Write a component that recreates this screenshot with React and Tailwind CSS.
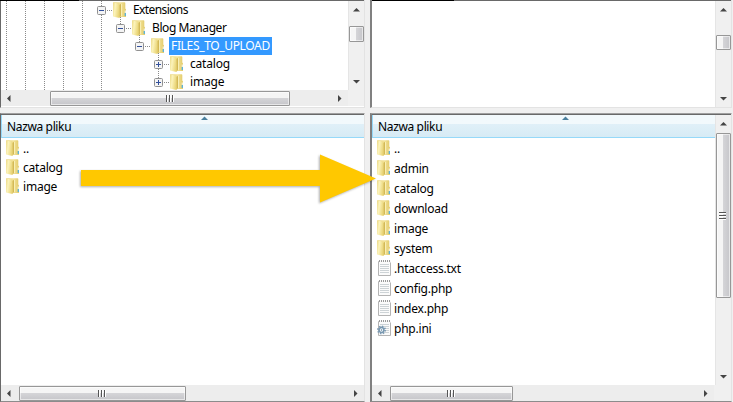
import React from 'react';

const Folder = () => (
  <svg width="14" height="16" viewBox="0 0 14 16" className="block shrink-0">
    <defs>
      <linearGradient id="front" x1="0" x2="1" y1="0" y2=".3">
        <stop offset="0" stopColor="#ecd984" />
        <stop offset="0.4" stopColor="#fbf3bb" />
        <stop offset="1" stopColor="#ead679" />
      </linearGradient>
      <linearGradient id="back" x1="0" x2="1">
        <stop offset="0" stopColor="#ead680" />
        <stop offset="0.6" stopColor="#f3e399" />
        <stop offset="1" stopColor="#e2ca68" />
      </linearGradient>
    </defs>
    <path d="M0 1Q0 .3 .8 .3H11.500Q12.300 .3 12.300 1V6.500L13 7.500V14.500Q13 15 12.500 15H6L1 14Z" fill="url(#back)" />
    <path d="M0 1Q0 .5 .8 .6L6.500 2V15.900L.8 14.800Q0 14.600 0 14Z" fill="url(#front)" />
    <path d="M6.500 3L8 1.800V13.800L6.500 15.900Z" fill="#d3b956" />
    <path d="M8.500 2V14" stroke="#f8efb5" />
    <path d="M12.300 8.500v2.500" stroke="#f4f3e4" strokeWidth="1.200" />
    <path d="M12.300 11v3" stroke="#4fb0e4" strokeWidth="1.200" />
  </svg>
);

const Page = ({ gear }) => (
  <svg width="15" height="16" viewBox="0 0 15 16" className="block shrink-0">
    <path d="M1.500 1.500H13.500V15.500H1.500Z" fill="#fbfbfb" stroke="#b4b4b4" />
    <path d="M2 1.500H14" stroke="#f8f8f8" strokeWidth="2" />
    <path d="M2 1H14" stroke="#9a9a9a" strokeWidth="2" strokeDasharray="1 1" />
    <path d="M3 4.500H12M3 6.500H12M3 8.500H12M3 10.500H12M3 12.500H12" stroke="#cdd3d6" />
    {gear && (
      <g>
        <circle cx="4.500" cy="10" r="3.700" fill="none" stroke="#7c9bb3" strokeWidth="1.600" strokeDasharray="1.450 1.450" />
        <circle cx="4.500" cy="10" r="2.400" fill="#f2f7fa" stroke="#7897b0" strokeWidth="1.500" />
        <circle cx="4.500" cy="10" r=".7" fill="#5f7f99" />
      </g>
    )}
  </svg>
);

const arrows = {
  up: 'M0 5.500L3.500 2 7 5.500Z',
  down: 'M0 2L3.500 5.500 7 2Z',
  left: 'M5.500 0V7L2 3.500Z',
  right: 'M2 0V7L5.500 3.500Z',
};

const Arrow = ({ dir }) => (
  <svg width="7" height="7" viewBox="0 0 7 7" className="block shrink-0">
    <path d={arrows[dir]} fill="#444" />
  </svg>
);

const VScroll = ({ before, size, grip }) => (
  <div className="flex w-4 shrink-0 flex-col items-center border-l border-[#e5e5e5] bg-[#f0f0f0]">
    <div className="pt-[5px]"><Arrow dir="up" /></div>
    <div style={{ height: before }} className="shrink-0" />
    <div
      style={{ height: size }}
      className="-ml-px flex w-[15px] shrink-0 items-center justify-center rounded-[1px] border border-[#979797] bg-linear-to-r from-[#f5f5f5] from-45% via-[#d4d4d7] via-50% to-[#c6c6ca] shadow-[inset_0_0_0_1px_#ffffff90]"
    >
      {grip && (
        <svg width="8" height="9" viewBox="0 0 8 9"><path d="M0 1.500H7M0 4.500H7M0 7.500H7" stroke="#555" /><path d="M0 2.500H7M0 5.500H7M0 8.500H7" stroke="#fff" /></svg>
      )}
    </div>
    <div className="flex-1" />
    <div className="pb-[5px]"><Arrow dir="down" /></div>
  </div>
);

const HScroll = ({ before, size, className }) => (
  <div className={'flex h-4 shrink-0 items-center bg-[#ededed] ' + className}>
    <div className="pl-[4px]"><Arrow dir="left" /></div>
    <div style={{ width: before }} className="shrink-0" />
    <div
      style={{ width: size }}
      className="flex h-[15px] shrink-0 items-center justify-center rounded-[1px] border border-[#979797] bg-linear-to-b from-[#f5f5f5] from-45% via-[#d4d4d7] via-50% to-[#c6c6ca] shadow-[inset_0_0_0_1px_#ffffff90]"
    >
      <svg width="9" height="7" viewBox="0 0 9 7"><path d="M.5 0V7M3.500 0V7M6.500 0V7" stroke="#555" /><path d="M1.500 0V7M4.500 0V7M7.500 0V7" stroke="#fff" /></svg>
    </div>
    <div className="flex-1" />
    <div className="pr-[5px]"><Arrow dir="right" /></div>
  </div>
);

const tree = [
  { name: 'Extensions', indent: 96, open: true, tracking: 'tracking-[-0.6px]' },
  { name: 'Blog Manager', indent: 115, open: true, tracking: 'tracking-[-0.42px]' },
  { name: 'FILES_TO_UPLOAD', indent: 134, open: true, selected: true, tracking: 'tracking-[-0.34px]' },
  { name: 'catalog', indent: 153, tracking: 'tracking-[-0.2px]' },
  { name: 'image', indent: 153, tracking: 'tracking-[-0.2px]' },
];

const TreeRow = ({ name, indent, open, selected, tracking }) => (
  <div className="flex h-[18px] shrink-0 items-center" style={{ paddingLeft: indent }}>
    <svg width="15" height="9" viewBox="0 0 15 9" className="block shrink-0">
      <rect x=".5" y=".5" width="8" height="8" rx="1" fill="#f4f4f4" stroke="#919191" />
      <path d={open ? 'M2 4.500H7' : 'M2 4.500H7M4.500 2V7'} stroke="#33509b" />
      <path d="M10 4.500H15" stroke="#8a8a8a" strokeDasharray="1 1" />
    </svg>
    <div className="ml-px"><Folder /></div>
    <div className={'ml-[4px] flex h-[18px] items-center pl-[2px] pr-[2px] ' + tracking + (selected ? ' bg-[#3399ff] text-white' : '')}>{name}</div>
  </div>
);

const Header = () => (
  <div className="flex h-[23px] shrink-0 items-center border-b border-l border-[#96d9f9] bg-linear-to-b from-[#f2f9fc] from-40% via-[#e0f0f8] via-40% to-[#d7ebf5] pt-[2px] pl-[5px]">
    <span className="flex-1 tracking-[-0.36px]">Nazwa pliku</span>
  </div>
);

const Sort = ({ className }) => (
  <svg width="7" height="4" viewBox="0 0 7 4" className={'absolute top-[2px] ' + className}>
    <path d="M0 4L3.500 .5 7 4Z" fill="#4a7f9d" />
  </svg>
);

const Row = ({ name, kind, className }) => (
  <div className={'flex shrink-0 tracking-[-0.22px] ' + className}>
    {kind ? <Page gear={kind === 'gear'} /> : <Folder />}
    <span className={kind ? 'ml-[2px] pt-px' : 'ml-[3px] pt-px'}>{name}</span>
  </div>
);

const remote = [
  ['..'], ['admin'], ['catalog'], ['download'], ['image'], ['system'],
  ['.htaccess.txt', 'page'], ['config.php', 'page'], ['index.php', 'page'], ['php.ini', 'gear'],
];

export default function App() {
  return (
    <div className="relative flex h-[402px] w-[733px] gap-[5px] overflow-hidden bg-[#f0f0f0] font-['Noto_Sans','Open_Sans',sans-serif] text-[12px] leading-4 text-black">
      <div className="flex w-[365px] flex-col gap-[5px]">
        <div className="flex h-[108px] flex-col border-r border-b border-l border-r-[#e3e3e3] border-b-[#e3e3e3] border-l-[#696969] bg-white">
          <div className="-ml-px flex h-px shrink-0 bg-[#696969]"><div className="w-[79px] bg-black" /></div>
          <div className="flex h-[89px] shrink-0">
            <div className="relative flex flex-1 flex-col">
              <svg width="180" height="89" viewBox="0 0 180 89" className="absolute top-0 left-0">
                <path d="M5.500 0V89M24.500 0V89M43.500 0V89M62.500 0V89M81.500 0V89M100.500 0V89M119.500 14V23M138.500 32V41M157.500 50V77" stroke="#8a8a8a" strokeDasharray="1 1" />
              </svg>
              <div className="relative flex flex-col">
                {tree.map((t) => <TreeRow key={t.name} {...t} />)}
              </div>
            </div>
            <VScroll before={13} size={16} />
          </div>
          <div className="flex"><HScroll before={38} size={240} className="w-[347px]" /><div className="flex-1 bg-[#f0f0f0]" /></div>
        </div>
        <div className="relative flex h-[289px] flex-col border-t border-r border-b border-l border-t-[#a0a0a0] border-r-[#e3e3e3] border-b-[#8c8c8c] border-l-[#696969] bg-white">
          <div className="-ml-px h-px shrink-0 bg-[#696969]" />
          <Header />
          <Sort className="left-[200px]" />
          <div className="flex flex-1 flex-col pt-[2px] pl-[5px]">
            <Row name=".." className="h-[19px]" />
            <Row name="catalog" className="h-[19px]" />
            <Row name="image" className="h-[19px]" />
          </div>
          <HScroll before={7} size={167} className="" />
        </div>
      </div>
      <div className="flex w-[362px] flex-col gap-[5px]">
        <div className="flex h-[108px] flex-col border-r border-b border-l-2 border-r-[#e3e3e3] border-b-[#e3e3e3] border-l-[#808080] bg-white">
          <div className="flex h-px shrink-0 bg-[#696969]"><div className="w-[82px] bg-black" /></div>
          <div className="flex flex-1"><div className="flex-1" /><VScroll before={22} size={15} /></div>
        </div>
        <div className="relative flex h-[289px] flex-col border-t border-r border-b border-l-2 border-t-[#a0a0a0] border-r-[#e3e3e3] border-b-[#8c8c8c] border-l-[#808080] bg-white">
          <div className="h-px shrink-0 bg-[#696969]" />
          <div className="flex flex-1">
            <div className="flex flex-1 flex-col">
              <Header />
              <Sort className="left-[190px]" />
              <div className="flex flex-col pt-[2px] pl-[5px]">
                {remote.map(([name, kind]) => <Row key={name} name={name} kind={kind} className="h-5" />)}
              </div>
            </div>
            <VScroll before={6} size={165} grip />
          </div>
          <div className="flex"><HScroll before={7} size={123} className="w-[342px]" /><div className="flex-1 bg-[#f0f0f0]" /></div>
        </div>
      </div>
      <svg width="310" height="70" viewBox="0 0 310 70" className="absolute top-[145px] left-[75px] drop-shadow-[-1px_1px_1px_#00000050]">
        <path d="M6 25H245V9.500L301 33.500 245 57.500V41H6Z" fill="#ffc800" />
      </svg>
    </div>
  );
}
